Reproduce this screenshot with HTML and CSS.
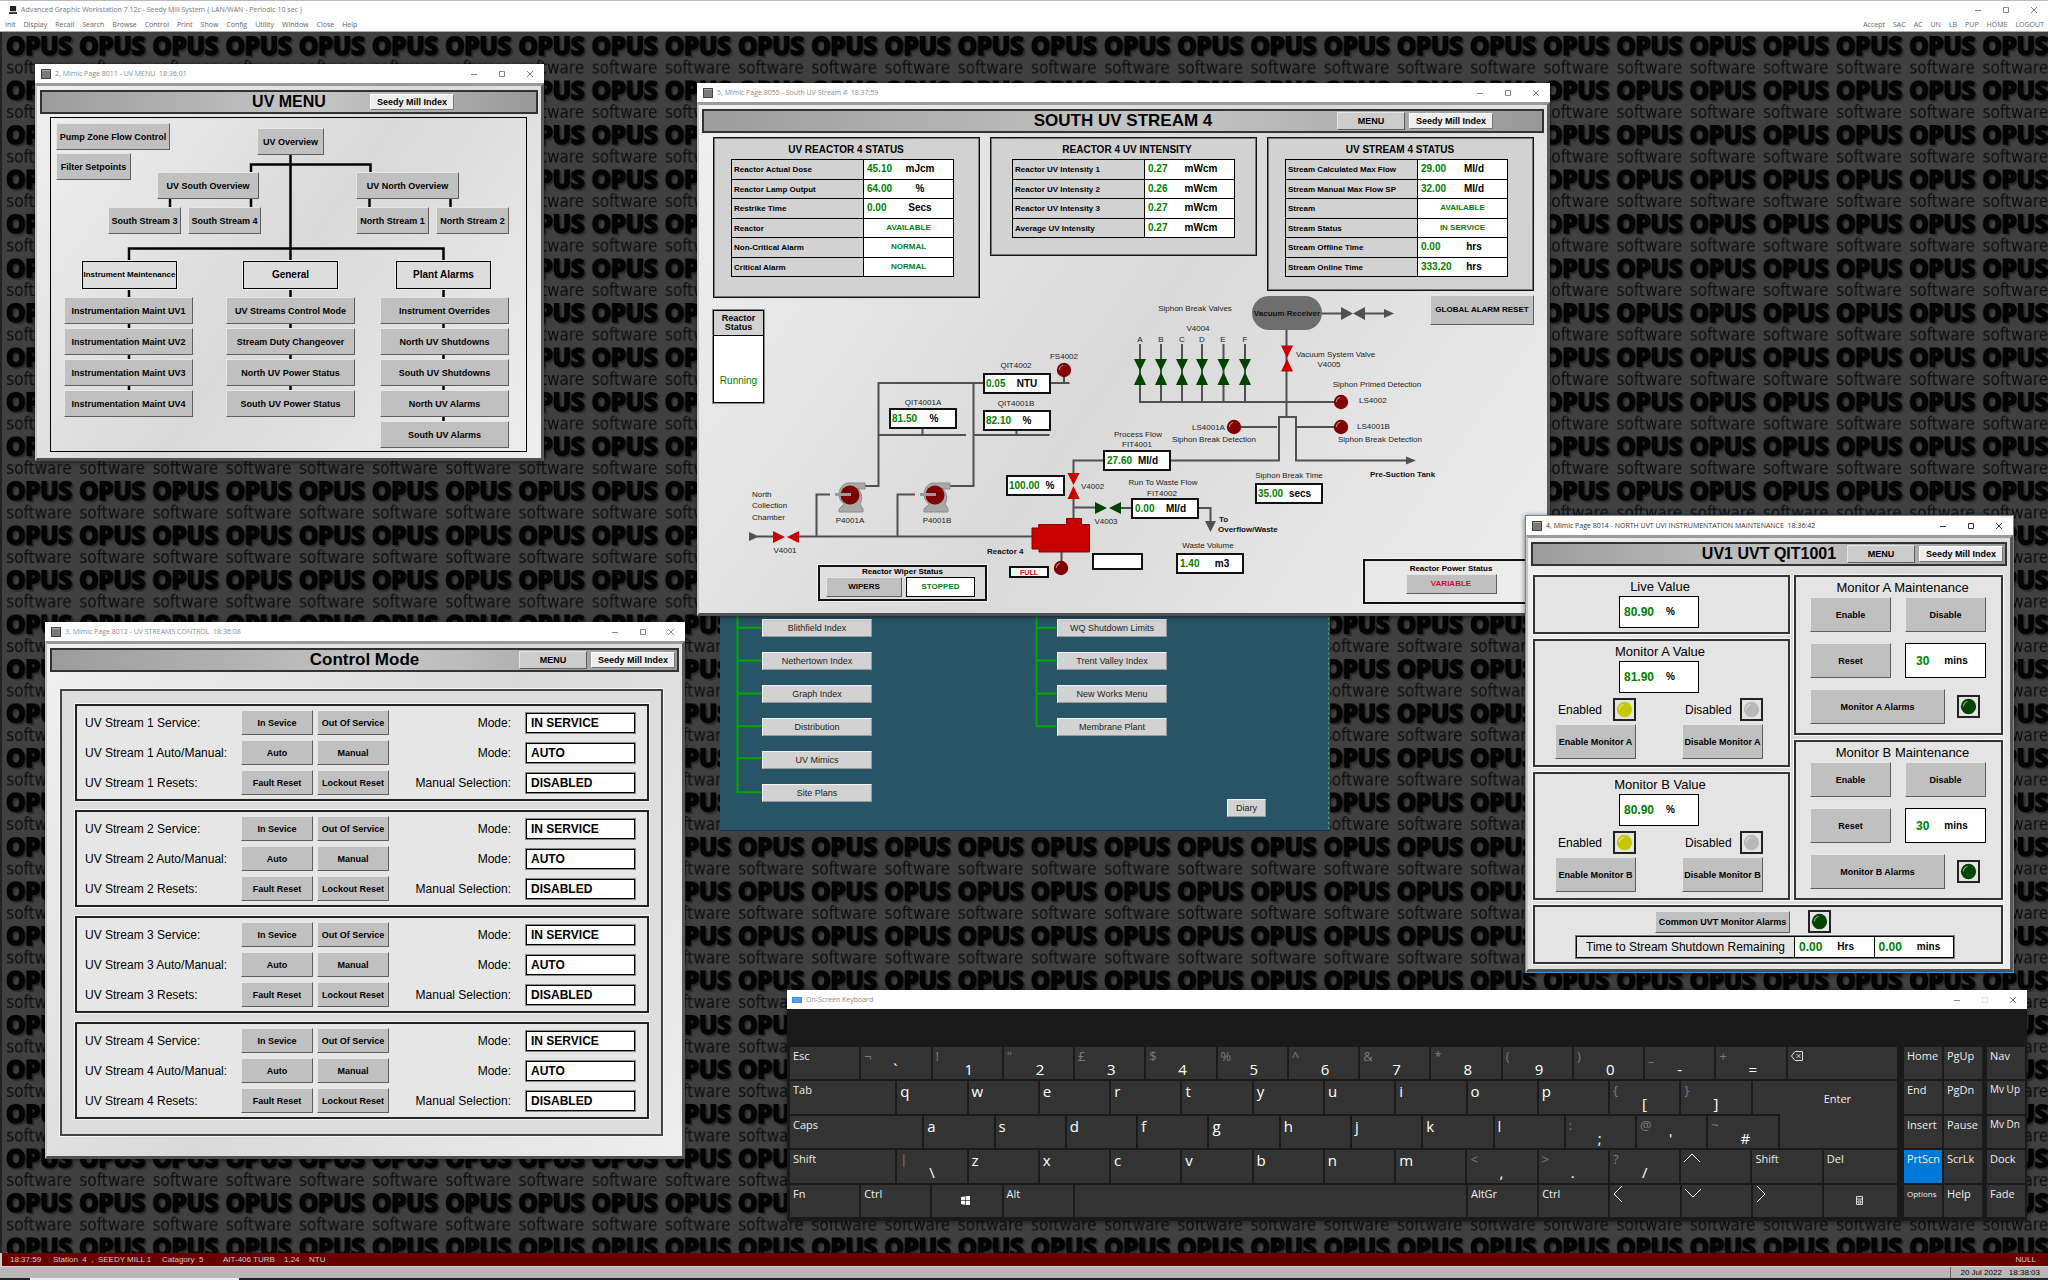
FILE: index.html
```html
<!DOCTYPE html>
<html lang="en">
<head>
<meta charset="utf-8">
<title>Advanced Graphic Workstation</title>
<link rel="stylesheet" href="styles.css">
</head>
<body>
<svg class="defs" width="0" height="0" aria-hidden="true">
  <symbol id="lamp" viewBox="0 0 16 16"><circle cx="8" cy="8" r="7.2" fill="currentColor"/><path d="M3.2 8A5 5 0 0 1 7 3.3" fill="none" stroke="#fff" stroke-opacity=".6" stroke-width="1"/></symbol>
  <symbol id="page" viewBox="0 0 10 10"><rect x=".5" y=".5" width="9" height="9" fill="#7a7a7a" stroke="#444"/><path d="M1 1.5h8" stroke="#aaa"/></symbol>
  <symbol id="min" viewBox="0 0 8 8"><path d="M1 4.5h6" stroke="currentColor" fill="none"/></symbol>
  <symbol id="max" viewBox="0 0 8 8"><path d="M1.5 1.5h5v5h-5z" stroke="currentColor" fill="none"/></symbol>
  <symbol id="close" viewBox="0 0 8 8"><path d="M1 1l6 6M7 1l-6 6" stroke="currentColor" fill="none"/></symbol>
  <symbol id="pump" viewBox="0 0 32 32">
    <path d="M12 1h18v6h-7a12 12 0 0 1 2 15l3 5v3H4v-3l5-5A12 12 0 0 1 12 1z" fill="#a8a8a8" stroke="#8c8c8c"/>
    <circle cx="15" cy="13" r="9.5" fill="#7e0000"/><path d="M0 12.5h16" stroke="#9a9a9a" stroke-width="3"/>
  </symbol>
</svg>

<header class="app">
  <div class="app-title">
    <svg class="app-icon" viewBox="0 0 9 9"><path d="M1 0h7v6H1zM0 7h9v2H0z" fill="#222"/></svg>
    <span>Advanced Graphic Workstation 7.12c - Seedy Mill System { LAN/WAN - Periodic 10 sec }</span>
    <span class="caption"><button aria-label="Minimise"><svg><use href="#min"/></svg></button><button aria-label="Maximise"><svg><use href="#max"/></svg></button><button aria-label="Close"><svg><use href="#close"/></svg></button></span>
  </div>
  <nav class="app-menu">
    <a href="#">Init</a><a href="#">Display</a><a href="#">Recall</a><a href="#">Search</a><a href="#">Browse</a><a href="#">Control</a><a href="#">Print</a><a href="#">Show</a><a href="#">Config</a><a href="#">Utility</a><a href="#">Window</a><a href="#">Close</a><a href="#">Help</a>
    <span class="app-right"><a href="#">Accept</a><a href="#">SAC</a><a href="#">AC</a><a href="#">UN</a><a href="#">LB</a><a href="#">PUP</a><a href="#">HOME</a><a href="#">LOGOUT</a></span>
  </nav>
</header>

<main class="desktop">
  <svg class="wallpaper" width="100%" height="100%" aria-hidden="true">
    <defs>
      <pattern id="opus" x="2" y="0" width="73.2" height="44.5" patternUnits="userSpaceOnUse">
        <rect width="74" height="45" fill="#404040"/>
        <text class="logo-shadow" x="37" y="25" text-anchor="middle">OPUS</text>
        <text class="logo" x="35" y="23" text-anchor="middle">OPUS</text>
        <text class="logo-sub" x="35" y="42" text-anchor="middle">software</text>
      </pattern>
    </defs>
    <rect width="100%" height="100%" fill="url(#opus)"/>
  </svg>

  <section class="index-page">
    <svg class="lines" viewBox="720 548 610 283" aria-hidden="true">
      <path d="M736.5 548V793H761M736.5 628H762M736.5 661H762M736.5 694H762M736.5 727H762M736.5 759H762M1036.5 548V727H1057M1036.5 628H1057M1036.5 661H1057M1036.5 694H1057" fill="none" stroke="#00a800" stroke-width="2"/>
      <path d="M1329.5 548V831" stroke="#5fae7a" stroke-dasharray="2 3"/>
    </svg>
    <div class="index-col index-left"><button>Blithfield Index</button><button>Nethertown Index</button><button>Graph Index</button><button>Distribution</button><button>UV Mimics</button><button>Site Plans</button></div>
    <div class="index-col index-right"><button>WQ Shutdown Limits</button><button>Trent Valley Index</button><button>New Works Menu</button><button>Membrane Plant</button></div>
    <button class="diary">Diary</button>
  </section>

  <section class="window uv-menu">
    <div class="titlebar"><svg class="page-icon"><use href="#page"/></svg><span>2, Mimic Page 8011 - UV MENU&nbsp; 18:36:01</span><span class="caption"><button aria-label="Minimise"><svg><use href="#min"/></svg></button><button aria-label="Maximise"><svg><use href="#max"/></svg></button><button aria-label="Close"><svg><use href="#close"/></svg></button></span></div>
    <div class="pane">
      <div class="banner"><h2>UV MENU</h2><div class="banner-nav nav-far"><button class="light">Seedy Mill Index</button></div></div>
      <div class="tree">
        <svg class="lines" viewBox="50 117 477 335" aria-hidden="true"><path d="M290.5 154V391M251 172V164.5H370.5V172M170 198V207M251 198V207M369.500 198V207M450.500 198V207M129 391V248.500H443.500V422" fill="none" stroke="#000" stroke-width="2.500"/></svg>
        <button class="node n-pump">Pump Zone Flow Control</button>
        <button class="node n-filter">Filter Setpoints</button>
        <button class="node n-over">UV Overview</button>
        <button class="node n-south">UV South Overview</button>
        <button class="node n-north">UV North Overview</button>
        <div class="pair p-south"><button class="node">South Stream 3</button><button class="node">South Stream 4</button></div>
        <div class="pair p-north"><button class="node">North Stream 1</button><button class="node">North Stream 2</button></div>
        <h3 class="group g-inst">Instrument Maintenance</h3>
        <h3 class="group g-gen">General</h3>
        <h3 class="group g-plant">Plant Alarms</h3>
        <div class="stack s-inst"><button class="node">Instrumentation Maint UV1</button><button class="node">Instrumentation Maint UV2</button><button class="node">Instrumentation Maint UV3</button><button class="node">Instrumentation Maint UV4</button></div>
        <div class="stack s-gen"><button class="node">UV Streams Control Mode</button><button class="node">Stream Duty Changeover</button><button class="node">North UV Power Status</button><button class="node">South UV Power Status</button></div>
        <div class="stack s-plant"><button class="node">Instrument Overrides</button><button class="node">North UV Shutdowns</button><button class="node">South UV Shutdowns</button><button class="node">North UV Alarms</button><button class="node">South UV Alarms</button></div>
      </div>
    </div>
  </section>

  <section class="window stream4">
    <div class="titlebar"><svg class="page-icon"><use href="#page"/></svg><span>5, Mimic Page 8055 - South UV Stream 4&nbsp; 18:37:59</span><span class="caption"><button aria-label="Minimise"><svg><use href="#min"/></svg></button><button aria-label="Maximise"><svg><use href="#max"/></svg></button><button aria-label="Close"><svg><use href="#close"/></svg></button></span></div>
    <div class="pane">
      <svg class="lines" viewBox="699 105 848 508">
        <g class="pipe">
          <path d="M983 383H878.500V486H862M973.500 383V486H947M1050 383H1069.500M1064 376V383M878 435H966M922.500 429V435M974 435H1049.500M1016.500 430V435"/>
          <path d="M830 494.500H816.500V536M915 494.500H897.500V536M757 536.500H773M798 536.500H1032M1061.500 552V562"/>
          <path d="M1073.500 474V460.500H1104M1073.500 498V518M1073.500 507.500H1095M1121 508H1131M1199 508H1210.500V522"/>
          <path d="M1171 460.500H1279V417H1296V460.500H1406M1241 427H1277M1297 427H1334M1286.500 330V417M1139 402H1334"/>
          <path d="M1140 344V402M1161 344V402M1182 344V402M1202 344V402M1223.500 344V402M1245 344V402M1321 313.500H1341M1365 313.500H1384"/>
        </g>
        <path fill="#505050" d="M749 532l10 4.500-10 4.500zM1205 521h11l-5.500 11zM1406 456.500l10 4-10 4zM1341 307l12 6.500-12 6.500zM1365 307l-12 6.500 12 6.500zM1384 309l10 4.500-10 4.500z"/>
        <path fill="#c80000" d="M773 531l12 6-12 6zM799 531l-12 6 12 6zM1067.500 473h12l-6 12zM1067.500 499h12l-6-13zM1281 345.500h12l-6 12.500zM1281 371.500h12l-6-12.500z"/>
        <path fill="#004400" d="M1095 502l12 6-12 6zM1121 502l-12 6 12 6zM1134 359h12l-6 12zM1134 385h12l-6-13zM1155 359h12l-6 12zM1155 385h12l-6-13zM1176 359h12l-6 12zM1176 385h12l-6-13zM1196 359h12l-6 12zM1196 385h12l-6-13zM1217.500 359h12l-6 12zM1217.500 385h12l-6-13zM1239 359h12l-6 12zM1239 385h12l-6-13z"/>
        <use href="#pump" x="835" y="482" width="32" height="32"/>
        <use href="#pump" x="920" y="482" width="32" height="32"/>
        <path fill="#c80000" stroke="#8e0000" d="M1038.500 524.500h28v-6h15v6h8v27.500h-50.500v-3h-7v-21h7z"/>
        <rect x="1252" y="296" width="70" height="34" rx="17" fill="#6e6e6e"/>
        <g color="#7e0000">
          <use href="#lamp" x="1056" y="362" width="16" height="16"/><use href="#lamp" x="1053" y="560" width="16" height="16"/><use href="#lamp" x="1333" y="394" width="16" height="16"/><use href="#lamp" x="1226" y="419" width="16" height="16"/><use href="#lamp" x="1333" y="419" width="16" height="16"/>
        </g>
        <g class="box">
          <rect x="984" y="374" width="66" height="19"/><rect x="890" y="409" width="66" height="19"/><rect x="984" y="411" width="66" height="19"/><rect x="1007" y="476" width="57" height="19"/><rect x="1104" y="451" width="66" height="19"/><rect x="1132" y="499" width="66" height="19"/><rect x="1177" y="554" width="66" height="19"/><rect x="1256" y="484" width="66" height="19"/><rect x="1010" y="567" width="38" height="10"/><rect x="1093" y="554" width="49" height="15"/>
        </g>
        <g class="val">
          <text x="986" y="387">0.05</text><text x="892" y="422">81.50</text><text x="986" y="424">82.10</text><text x="1009" y="489">100.00</text><text x="1107" y="464">27.60</text><text x="1135" y="512">0.00</text><text x="1180" y="567">1.40</text><text x="1258" y="497">35.00</text>
        </g>
        <g class="unit">
          <text x="1027" y="387">NTU</text><text x="934" y="422">%</text><text x="1027" y="424">%</text><text x="1050" y="489">%</text><text x="1148" y="464">MI/d</text><text x="1176" y="512">MI/d</text><text x="1222" y="567">m3</text><text x="1300" y="497">secs</text>
        </g>
        <text class="full" x="1029" y="575">FULL</text>
        <g class="tag mid">
          <text x="1016" y="368">QIT4002</text><text x="1064" y="359">FS4002</text><text x="923" y="405">QIT4001A</text><text x="1016" y="406">QIT4001B</text><text x="850" y="523">P4001A</text><text x="937" y="523">P4001B</text><text x="785" y="553">V4001</text><text x="1106" y="524">V4003</text>
          <text x="1138" y="437">Process Flow</text><text x="1137" y="447">FIT4001</text><text x="1163" y="485">Run To Waste Flow</text><text x="1162" y="496">FIT4002</text><text x="1208" y="548">Waste Volume</text><text x="1289" y="478">Siphon Break Time</text>
          <text x="1214" y="442">Siphon Break Detection</text><text x="1380" y="442">Siphon Break Detection</text><text x="1377" y="387">Siphon Primed Detection</text><text x="1198" y="331">V4004</text><text x="1195" y="311">Siphon Break Valves</text><text x="1329" y="367">V4005</text>
          <text x="1140" y="342">A</text><text x="1161" y="342">B</text><text x="1182" y="342">C</text><text x="1202" y="342">D</text><text x="1223" y="342">E</text><text x="1245" y="342">F</text>
        </g>
        <g class="tag">
          <text x="752" y="497">North</text><text x="752" y="508">Collection</text><text x="752" y="520">Chamber</text><text x="1081" y="489">V4002</text><text x="1192" y="430">LS4001A</text><text x="1357" y="429">LS4001B</text><text x="1359" y="403">LS4002</text><text x="1296" y="357">Vacuum System Valve</text>
        </g>
        <g class="tag strong">
          <text x="987" y="554">Reactor 4</text><text x="1219" y="522">To</text><text x="1218" y="532">Overflow/Waste</text><text x="1370" y="477">Pre-Suction Tank</text><text class="mid" x="1287" y="316">Vacuum Receiver</text>
        </g>
      </svg>
      <div class="banner"><h2 class="big">SOUTH UV STREAM 4</h2><div class="banner-nav nav-mid"><button class="menu-btn">MENU</button><button class="light">Seedy Mill Index</button></div></div>
      <div class="status-row">
        <section class="status tall"><h3>UV REACTOR 4 STATUS</h3>
          <table class="six"><tr><th scope="row">Reactor Actual Dose</th><td><b>45.10</b><i>mJcm</i></td></tr><tr><th scope="row">Reactor Lamp Output</th><td><b>64.00</b><i>%</i></td></tr><tr><th scope="row">Restrike Time</th><td><b>0.00</b><i>Secs</i></td></tr><tr><th scope="row">Reactor</th><td class="state">AVAILABLE</td></tr><tr><th scope="row">Non-Critical Alarm</th><td class="state">NORMAL</td></tr><tr><th scope="row">Critical Alarm</th><td class="state">NORMAL</td></tr></table>
        </section>
        <section class="status short"><h3>REACTOR 4 UV INTENSITY</h3>
          <table class="four"><tr><th scope="row">Reactor UV Intensity 1</th><td><b>0.27</b><i>mWcm</i></td></tr><tr><th scope="row">Reactor UV Intensity 2</th><td><b>0.26</b><i>mWcm</i></td></tr><tr><th scope="row">Reactor UV Intensity 3</th><td><b>0.27</b><i>mWcm</i></td></tr><tr><th scope="row">Average UV Intensity</th><td><b>0.27</b><i>mWcm</i></td></tr></table>
        </section>
        <section class="status"><h3>UV STREAM 4 STATUS</h3>
          <table class="six"><tr><th scope="row">Stream Calculated Max Flow</th><td><b>29.00</b><i>MI/d</i></td></tr><tr><th scope="row">Stream Manual Max Flow SP</th><td><b>32.00</b><i>MI/d</i></td></tr><tr><th scope="row">Stream</th><td class="state">AVAILABLE</td></tr><tr><th scope="row">Stream Status</th><td class="state">IN SERVICE</td></tr><tr><th scope="row">Stream Offline Time</th><td><b>0.00</b><i>hrs</i></td></tr><tr><th scope="row">Stream Online Time</th><td><b>333.20</b><i>hrs</i></td></tr></table>
        </section>
      </div>
      <div class="reactor-state"><h3>Reactor Status</h3><p>Running</p></div>
      <button class="alarm-reset">GLOBAL ALARM RESET</button>
      <div class="wiper"><h3>Reactor Wiper Status</h3><div><button>WIPERS</button><output>STOPPED</output></div></div>
      <div class="power"><h3>Reactor Power Status</h3><button>VARIABLE</button></div>
    </div>
  </section>

  <section class="window control">
    <div class="titlebar"><svg class="page-icon"><use href="#page"/></svg><span>3, Mimic Page 8012 - UV STREAMS CONTROL&nbsp; 18:36:08</span><span class="caption"><button aria-label="Minimise"><svg><use href="#min"/></svg></button><button aria-label="Maximise"><svg><use href="#max"/></svg></button><button aria-label="Close"><svg><use href="#close"/></svg></button></span></div>
    <div class="pane">
      <div class="banner"><h2 class="big">Control Mode</h2><div class="banner-nav"><button class="menu-btn">MENU</button><button class="light">Seedy Mill Index</button></div></div>
      <div class="modes">
        <div class="mode-group">
          <span>UV Stream 1 Service:</span><button>In Sevice</button><button>Out Of Service</button><label for="m11">Mode:</label><output id="m11">IN SERVICE</output>
          <span>UV Stream 1 Auto/Manual:</span><button>Auto</button><button>Manual</button><label for="m12">Mode:</label><output id="m12">AUTO</output>
          <span>UV Stream 1 Resets:</span><button>Fault Reset</button><button>Lockout Reset</button><label for="m13">Manual Selection:</label><output id="m13">DISABLED</output>
        </div>
        <div class="mode-group">
          <span>UV Stream 2 Service:</span><button>In Sevice</button><button>Out Of Service</button><label for="m21">Mode:</label><output id="m21">IN SERVICE</output>
          <span>UV Stream 2 Auto/Manual:</span><button>Auto</button><button>Manual</button><label for="m22">Mode:</label><output id="m22">AUTO</output>
          <span>UV Stream 2 Resets:</span><button>Fault Reset</button><button>Lockout Reset</button><label for="m23">Manual Selection:</label><output id="m23">DISABLED</output>
        </div>
        <div class="mode-group">
          <span>UV Stream 3 Service:</span><button>In Sevice</button><button>Out Of Service</button><label for="m31">Mode:</label><output id="m31">IN SERVICE</output>
          <span>UV Stream 3 Auto/Manual:</span><button>Auto</button><button>Manual</button><label for="m32">Mode:</label><output id="m32">AUTO</output>
          <span>UV Stream 3 Resets:</span><button>Fault Reset</button><button>Lockout Reset</button><label for="m33">Manual Selection:</label><output id="m33">DISABLED</output>
        </div>
        <div class="mode-group">
          <span>UV Stream 4 Service:</span><button>In Sevice</button><button>Out Of Service</button><label for="m41">Mode:</label><output id="m41">IN SERVICE</output>
          <span>UV Stream 4 Auto/Manual:</span><button>Auto</button><button>Manual</button><label for="m42">Mode:</label><output id="m42">AUTO</output>
          <span>UV Stream 4 Resets:</span><button>Fault Reset</button><button>Lockout Reset</button><label for="m43">Manual Selection:</label><output id="m43">DISABLED</output>
        </div>
      </div>
    </div>
  </section>

  <section class="window active monitor">
    <div class="titlebar"><svg class="page-icon"><use href="#page"/></svg><span>4, Mimic Page 8014 - NORTH UVT UVI INSTRUMENTATION MAINTENANCE&nbsp; 18:36:42</span><span class="caption"><button aria-label="Minimise"><svg><use href="#min"/></svg></button><button aria-label="Maximise"><svg><use href="#max"/></svg></button><button aria-label="Close"><svg><use href="#close"/></svg></button></span></div>
    <div class="pane">
      <div class="banner"><h2>UV1 UVT QIT1001</h2><div class="banner-nav"><button class="menu-btn">MENU</button><button class="light">Seedy Mill Index</button></div></div>
      <div class="mon-grid">
        <div class="mon-left">
          <section class="card live"><h3>Live Value</h3><output class="reading"><b>80.90</b><i>%</i></output></section>
          <section class="card value"><h3>Monitor A Value</h3><output class="reading"><b>81.90</b><i>%</i></output>
            <div class="toggles"><div class="toggle"><span class="flag">Enabled<svg class="lamp yellow"><use href="#lamp"/></svg></span><button>Enable Monitor A</button></div><div class="toggle"><span class="flag">Disabled<svg class="lamp grey"><use href="#lamp"/></svg></span><button>Disable Monitor A</button></div></div></section>
          <section class="card value"><h3>Monitor B Value</h3><output class="reading"><b>80.90</b><i>%</i></output>
            <div class="toggles"><div class="toggle"><span class="flag">Enabled<svg class="lamp yellow"><use href="#lamp"/></svg></span><button>Enable Monitor B</button></div><div class="toggle"><span class="flag">Disabled<svg class="lamp grey"><use href="#lamp"/></svg></span><button>Disable Monitor B</button></div></div></section>
        </div>
        <div class="mon-right">
          <section class="card maint"><h3>Monitor A Maintenance</h3>
            <div class="keys2"><button>Enable</button><button>Disable</button><button>Reset</button><output class="mins"><b>30</b><i>mins</i></output></div>
            <div class="alarms"><button>Monitor A Alarms</button><svg class="lamp green"><use href="#lamp"/></svg></div></section>
          <section class="card maint"><h3>Monitor B Maintenance</h3>
            <div class="keys2"><button>Enable</button><button>Disable</button><button>Reset</button><output class="mins"><b>30</b><i>mins</i></output></div>
            <div class="alarms"><button>Monitor B Alarms</button><svg class="lamp green"><use href="#lamp"/></svg></div></section>
        </div>
        <section class="card common">
          <div class="common-top"><button>Common UVT Monitor Alarms</button><svg class="lamp green"><use href="#lamp"/></svg></div>
          <div class="countdown"><span>Time to Stream Shutdown Remaining</span><output><b>0.00</b><i>Hrs</i></output><output><b>0.00</b><i>mins</i></output></div>
        </section>
      </div>
    </div>
  </section>

  <section class="window keyboard">
    <div class="titlebar"><svg class="kb-icon" viewBox="0 0 10 6"><rect width="10" height="6" fill="#3b8ee0"/><path d="M1 1.500h8M1 3h8M3 4.500h4" stroke="#9cc8f4" stroke-width=".8" stroke-dasharray="1 .6"/></svg><span>On-Screen Keyboard</span><span class="caption"><button aria-label="Minimise"><svg><use href="#min"/></svg></button><button class="faint" aria-label="Maximise"><svg><use href="#max"/></svg></button><button aria-label="Close"><svg><use href="#close"/></svg></button></span></div>
    <div class="kb">
      <div class="kb-main">
        <div class="kb-row"><button class="k">Esc</button><button class="k two"><s>¬</s><b>`</b></button><button class="k two"><s>!</s><b>1</b></button><button class="k two"><s>"</s><b>2</b></button><button class="k two"><s>£</s><b>3</b></button><button class="k two"><s>$</s><b>4</b></button><button class="k two"><s>%</s><b>5</b></button><button class="k two"><s>^</s><b>6</b></button><button class="k two"><s>&amp;</s><b>7</b></button><button class="k two"><s>*</s><b>8</b></button><button class="k two"><s>(</s><b>9</b></button><button class="k two"><s>)</s><b>0</b></button><button class="k two"><s>_</s><b>-</b></button><button class="k two"><s>+</s><b>=</b></button><button class="k w-back" aria-label="Backspace"><svg class="back" viewBox="0 0 12 10"><path d="M4 .5h7.500v9H4L.5 5zM5.500 3l4 4M9.500 3l-4 4" fill="none" stroke="#ddd"/></svg></button></div>
        <div class="kb-row"><button class="k w-tab">Tab</button><button class="k ch">q</button><button class="k ch">w</button><button class="k ch">e</button><button class="k ch">r</button><button class="k ch">t</button><button class="k ch">y</button><button class="k ch">u</button><button class="k ch">i</button><button class="k ch">o</button><button class="k ch">p</button><button class="k two"><s>{</s><b>[</b></button><button class="k two"><s>}</s><b>]</b></button><button class="k w-enter">Enter</button></div>
        <div class="kb-row"><button class="k w-caps">Caps</button><button class="k ch">a</button><button class="k ch">s</button><button class="k ch">d</button><button class="k ch">f</button><button class="k ch">g</button><button class="k ch">h</button><button class="k ch">j</button><button class="k ch">k</button><button class="k ch">l</button><button class="k two"><s>:</s><b>;</b></button><button class="k two"><s>@</s><b>'</b></button><button class="k two"><s>~</s><b>#</b></button><div class="k w-foot"></div></div>
        <div class="kb-row"><button class="k w-tab">Shift</button><button class="k two"><s>|</s><b>\</b></button><button class="k ch">z</button><button class="k ch">x</button><button class="k ch">c</button><button class="k ch">v</button><button class="k ch">b</button><button class="k ch">n</button><button class="k ch">m</button><button class="k two"><s>&lt;</s><b>,</b></button><button class="k two"><s>&gt;</s><b>.</b></button><button class="k two"><s>?</s><b>/</b></button><button class="k" aria-label="Up"><svg class="arrow" viewBox="0 0 16 16"><path d="M0 11l8-8 8 8"/></svg></button><button class="k">Shift</button><button class="k w-del">Del</button></div>
        <div class="kb-row"><button class="k">Fn</button><button class="k">Ctrl</button><button class="k" aria-label="Windows"><svg class="win" viewBox="0 0 9 9"><path d="M0 1l4-.6v3.800H0zM4.700.3L9-.3v4.500H4.700zM0 4.900h4v3.800L0 8zM4.700 4.900H9v4.500l-4.300-.6z" fill="#fff"/></svg></button><button class="k">Alt</button><button class="k w-space" aria-label="Space"></button><button class="k">AltGr</button><button class="k">Ctrl</button><button class="k" aria-label="Left"><svg class="arrow" viewBox="0 0 16 16"><path d="M9 0L1 8l8 8"/></svg></button><button class="k" aria-label="Down"><svg class="arrow" viewBox="0 0 16 16"><path d="M0 3l8 8 8-8"/></svg></button><button class="k" aria-label="Right"><svg class="arrow" viewBox="0 0 16 16"><path d="M1 0l8 8-8 8"/></svg></button><button class="k w-del" aria-label="Menu"><svg class="ctx" viewBox="0 0 7 9"><path d="M.5.5h6v8h-6zM.5 3h6M2 5h3v2H2z" fill="none" stroke="#ddd"/></svg></button></div>
      </div>
      <div class="kb-side">
        <button>Home</button><button>PgUp</button><button>Nav</button>
        <button>End</button><button>PgDn</button><button class="sm">Mv Up</button>
        <button>Insert</button><button>Pause</button><button class="sm">Mv Dn</button>
        <button class="on">PrtScn</button><button>ScrLk</button><button>Dock</button>
        <button class="xs">Options</button><button>Help</button><button>Fade</button>
      </div>
    </div>
  </section>
</main>

<footer>
  <div class="alarm-bar"><span class="a-time">18:37:59</span><span class="a-station">Station&nbsp; 4&nbsp; , &nbsp;SEEDY MILL 1</span><span class="a-cat">Catagory&nbsp; 5</span><span class="a-tag">AIT-406 TURB</span><span class="a-val">1.24</span><span>NTU</span><span class="null">NULL</span></div>
  <div class="info-bar"><span>20 Jul 2022</span><span>18:38:03</span></div>
  <div class="taskbar"></div>
</footer>
</body>
</html>
```
FILE: styles.css
```css
* { box-sizing: border-box; }
body { margin: 0; height: 100vh; display: flex; flex-direction: column; overflow: hidden; background: #c8c8c8; color: #000; font: 9px/12px "Liberation Sans", Arial, sans-serif; }
h2, h3, p { margin: 0; font-size: inherit; }
button { padding: 0; font: bold 9px/12px "Liberation Sans", Arial, sans-serif; color: #000; white-space: nowrap; background: #c0c0c0; border: 1px solid; border-color: #e6e6e6 #5e5e5e #5e5e5e #e6e6e6; border-radius: 0; }
i, s { font-style: normal; text-decoration: none; }
.defs { position: absolute; }

/* application frame */
.app { background: #fff; border-top: 1px solid #bbb; height: 32px; border-bottom: 1px solid #aaa; font: 7px/12px "Open Sans", "Noto Sans", sans-serif; color: #666; }
.app-title { display: flex; align-items: center; height: 18px; padding-left: 9px; gap: 4px; color: #777; }
.app-icon { width: 8px; height: 8px; }
.app-menu { display: flex; gap: 8px; padding: 0 4px 0 5px; }
.app-menu a { color: inherit; text-decoration: none; }
.app-right { display: flex; gap: 8px; margin-left: auto; }
.caption { display: flex; margin-left: auto; color: #888; }
.caption button { width: 28px; height: 18px; border: 0; background: none; color: inherit; display: grid; place-items: center; }
.caption .faint { color: #ddd; }
.caption svg { width: 8px; height: 8px; }

.desktop { position: relative; flex: 1; min-height: 0; overflow: hidden; border-left: 2px solid #222; }
.wallpaper { position: absolute; left: 0; top: 0; }
.logo, .logo-shadow { font: bold 24px "Open Sans", "Noto Sans", sans-serif; }
.logo { fill: #060606; stroke: #000; stroke-width: 2px; }
.logo-shadow { fill: #262626; stroke: #2c2c2c; stroke-width: 2px; }
.logo-sub { font: 17px "DejaVu Sans Condensed", "Open Sans", sans-serif; fill: #0a0a0a; }

/* windows */
.window { position: absolute; display: flex; flex-direction: column; box-shadow: 0 1px 5px rgba(0,0,0,.6); }
.titlebar { display: flex; align-items: center; flex: none; height: 19px; padding-left: 6px; gap: 4px; background: #fff; color: #8c8c8c; font: 7px/12px "Open Sans", "Noto Sans", sans-serif; }
.page-icon { width: 10px; height: 10px; }
.active { border: 1px solid #4a8fd0; }
.active .titlebar, .active .caption { color: #333; }
.pane { position: relative; flex: 1; border: solid; border-width: 3px 3px 3px 2px; border-color: #9a9a9a #5a5a5a #505050 #c4c4c4; background: linear-gradient(125deg, #f0f0f0, #d9d9d9 50%, #eee); }
.lines { position: absolute; left: 0; top: 0; width: 100%; height: 100%; }
.banner { position: relative; display: grid; grid-template-columns: 1fr auto 1fr; align-items: center; height: 24px; margin: 4px 3px 0; border: 2px solid #303330; background: linear-gradient(90deg, #9c9c9c, #c6c6c6 55%, #989898); }
.banner h2 { grid-column: 2; font-size: 16px; line-height: 20px; }
.banner h2.big { font-size: 17px; }
.banner-nav { display: flex; justify-content: flex-end; align-items: center; gap: 4px; padding-right: 2px; }
.nav-far { padding-right: 82px; }
.nav-mid { padding-right: 49px; }
.menu-btn { width: 68px; height: 18px; background: #ccc; }
.light { width: 84px; height: 16px; background: #eee; border-color: #fff #777 #777 #fff; }

/* UV menu */
.uv-menu { left: 33px; top: 32px; width: 509px; height: 397px; }
.tree { position: relative; width: 477px; height: 335px; margin: 3px 0 0 13px; border: 1px solid #000; }
.tree .lines { left: -1px; top: -1px; width: 477px; height: 335px; }
.tree > button, .group, .pair, .stack { position: absolute; }
.node { height: 27px; }
.n-pump { left: 5px; top: 5px; width: 114px; }
.n-filter { left: 5px; top: 35px; width: 75px; }
.n-over { left: 206px; top: 10px; width: 67px; }
.n-south { left: 106px; top: 54px; width: 102px; }
.n-north { left: 305px; top: 54px; width: 103px; }
.pair { top: 89px; display: flex; gap: 7px; }
.pair .node { width: 73px; }
.p-south { left: 57px; }
.p-north { left: 305px; }
.group { top: 143px; width: 95px; height: 28px; border: 1px solid #000; outline: 1px solid #f0f0f0; font: bold 10px/26px "Liberation Sans", Arial, sans-serif; text-align: center; background: #ddd; white-space: nowrap; }
.g-inst { left: 31px; font-size: 8px; }
.g-gen { left: 192px; }
.g-plant { left: 345px; }
.stack { top: 179px; width: 129px; display: flex; flex-direction: column; gap: 4px; }
.s-inst { left: 13px; }
.s-gen { left: 175px; }
.s-plant { left: 329px; }

/* stream 4 mimic */
.stream4 { left: 695px; top: 51px; width: 853px; height: 533px; }
.pipe path { fill: none; stroke: #505050; stroke-width: 2px; }
.box rect { fill: #fff; stroke: #111; stroke-width: 2px; }
.val { font-weight: bold; font-size: 10px; fill: #008000; }
.unit { font-weight: bold; font-size: 10px; text-anchor: middle; }
.full { font-weight: bold; font-size: 7px; fill: #d00000; text-anchor: middle; }
.tag { font-size: 8px; fill: #222; }
.mid { text-anchor: middle; }
.strong { font-weight: bold; fill: #111; }
.status-row { position: relative; display: flex; align-items: flex-start; gap: 10px; margin: 4px 0 0 14px; }
.status { width: 267px; height: 154px; padding: 6px 0 0 17px; border: 1px solid #111; outline: 1px solid #777; outline-offset: -2px; background: #d2d2d2; }
.status.tall { height: 161px; }
.status.short { height: 119px; padding-left: 21px; }
.status h3 { width: 230px; font-size: 10px; line-height: 12px; margin-bottom: 3px; text-align: center; }
.status table { border-collapse: collapse; width: 223px; table-layout: fixed; }
.six { height: 118px; }
.four { height: 79px; }
.status th { width: 132px; padding: 2px 0 0 2px; font-size: 8px; line-height: 10px; text-align: left; border: 1px solid #000; }
.status td { padding: 0 0 0 3px; font-size: 10px; line-height: 12px; font-weight: bold; background: #fff; border: 1px solid #000; white-space: nowrap; }
.status td b { display: inline-block; width: 32px; color: #008000; }
.status td i { display: inline-block; width: 42px; text-align: center; }
.status td.state { padding: 0; font-size: 8px; text-align: center; color: #008020; }
.reactor-state { position: absolute; left: 14px; top: 205px; width: 51px; height: 93px; border: 1px solid #000; outline: 1px solid #888; background: #fff; text-align: center; font-size: 10px; }
.reactor-state h3 { height: 25px; padding-top: 3px; font-size: 9px; line-height: 9px; background: #d2d2d2; border-bottom: 1px solid #000; }
.reactor-state p { padding-top: 39px; font-size: 10px; color: #008000; }
.alarm-reset { position: absolute; left: 731px; top: 190px; width: 104px; height: 30px; font-size: 8px; }
.wiper, .power { position: absolute; border: 2px solid #111; outline: 1px solid #f4f4f4; text-align: center; font-size: 8px; line-height: 10px; }
.wiper { left: 119px; top: 460px; width: 169px; height: 36px; }
.wiper div { display: flex; gap: 4px; padding: 0 6px; }
.wiper button, .power button { font-size: 8px; height: 20px; }
.wiper button { width: 76px; }
.wiper output { width: 69px; height: 20px; border: 1px solid #000; background: #fff; font-weight: bold; line-height: 18px; color: #008020; }
.power { left: 664px; top: 454px; width: 171px; height: 45px; padding-top: 3px; padding-left: 5px; }
.power button { width: 91px; color: #c8102e; }

/* index page */
.index-page { position: absolute; left: 718px; top: 516px; width: 610px; height: 283px; background: #285467; border-bottom: 1px solid #173542; }
.index-page button { width: 110px; height: 18px; font-weight: normal; color: #222; background: #d2d2d2; border-color: #f4f4f4 #999 #999 #f4f4f4; }
.index-col { position: absolute; display: flex; flex-direction: column; gap: 15px; }
.index-left { left: 42px; top: 71px; }
.index-right { left: 337px; top: 71px; }
.index-page .diary { position: absolute; left: 507px; top: 251px; width: 39px; }

/* control mode */
.control { left: 43px; top: 590px; width: 640px; height: 537px; }
.modes { display: flex; flex-direction: column; gap: 9px; margin: 17px 19px 0 13px; padding: 13px 12px 15px 13px; height: 447px; border: 2px solid #444; outline: 1px solid #f6f6f6; background: #ddd; }
.mode-group { flex: 1; display: grid; grid-template-columns: 154px 72px 72px 1fr 109px; column-gap: 4px; row-gap: 5px; align-content: center; align-items: center; padding: 0 12px 0 6px; border: 2px solid #222; outline: 1px solid #f6f6f6; background: #e6e6e6; font-size: 12px; line-height: 16px; white-space: nowrap; }
.mode-group span { padding-left: 2px; }
.mode-group button { height: 25px; }
.mode-group label { text-align: right; padding-right: 11px; }
.mode-group output { height: 20px; padding-left: 4px; border: 1px solid #000; outline: 1px solid #888; background: #fff; font-weight: bold; line-height: 18px; }

/* monitor maintenance */
.monitor { left: 1523px; top: 483px; width: 489px; height: 458px; }
.mon-grid { display: grid; grid-template-columns: 257px 209px; gap: 5px 4px; margin: 9px 5px 0; }
.mon-left, .mon-right { display: flex; flex-direction: column; gap: 5px; }
.card { border: 2px solid #333; outline: 1px solid #fafafa; background: #e4e4e4; }
.card h3 { font-weight: normal; font-size: 13px; line-height: 16px; text-align: center; }
.mon-left h3 { padding-right: 3px; }
.live { height: 59px; padding-top: 2px; }
.value { height: 128px; padding-top: 3px; }
.reading, .mins { display: flex; align-items: center; width: 80px; height: 32px; border: 1px solid #000; background: #fff; font-weight: bold; }
.reading { margin: 1px 0 0 84px; padding-left: 4px; gap: 12px; font-size: 10px; }
.reading b, .mins b, .countdown b { font-size: 12px; color: #008000; }
.toggles { display: flex; gap: 46px; padding: 5px 0 0 20px; }
.toggle { width: 81px; }
.toggle button { width: 81px; height: 35px; margin-top: 3px; }
.flag { display: flex; align-items: center; justify-content: space-between; padding-left: 3px; font-size: 12px; }
.lamp { width: 23px; height: 23px; padding: 1px; border: 2px solid #222; }
.yellow { color: #c8c800; }
.grey { color: #b8b8b8; }
.green { color: #004400; }
.maint { height: 160px; padding: 3px 0 0 14px; }
.mon-right .maint h3 { margin: 0 0 1px -6px; }
.keys2 { display: grid; grid-template-columns: 81px 81px; gap: 11px 14px; }
.keys2 button, .keys2 output { height: 35px; width: 81px; }
.mins { padding-left: 10px; gap: 15px; font-size: 10px; }
.alarms { display: flex; align-items: center; gap: 12px; margin-top: 11px; }
.alarms button { width: 135px; height: 35px; }
.common { grid-column: 1 / 3; height: 59px; }
.common-top { display: flex; align-items: center; gap: 18px; padding: 3px 0 0 120px; }
.common-top button { width: 135px; height: 22px; }
.countdown { display: flex; width: 378px; height: 22px; margin: 3px 0 0 41px; border: 1px solid #000; outline: 1px solid #777; font-size: 12px; line-height: 20px; }
.countdown span { width: 217px; text-align: center; white-space: nowrap; }
.countdown output { flex: 1; display: flex; gap: 15px; padding-left: 4px; border-left: 1px solid #000; background: #fff; font-weight: bold; font-size: 10px; }

/* on-screen keyboard */
.keyboard { left: 785px; top: 958px; width: 1240px; height: 231px; background: #1a1a1a; }
.kb-icon { width: 10px; height: 6px; }
.keyboard .titlebar { padding-left: 5px; }
.kb { flex: 1; display: flex; gap: 5px; padding: 38px 0 2px 3px; }
.kb-main { flex: 1; display: grid; grid-template-rows: repeat(5, 1fr); }
.kb-row { display: flex; }
.kb button, .kb .k { position: relative; display: flex; align-items: flex-start; margin: 0; padding: 1px 0 0 3px; border: solid #1a1a1a; border-width: 0 2px 2px 0; background: #333; color: #eee; font: 11px/15px "Open Sans", "Noto Sans", sans-serif; text-align: left; }
.kb .k { flex: 1 1 71px; min-width: 0; }
.kb .w-back { flex-basis: 111px; padding-top: 2px; }
.kb .w-tab { flex-basis: 107px; }
.kb .w-enter { flex-basis: 146px; padding: 10px 0 0 71px; }
.kb .w-caps { flex-basis: 134px; }
.kb .w-foot { flex-basis: 119px; margin-top: -2px; }
.kb .w-del { flex-basis: 75px; }
.kb .w-space { flex-basis: 393px; }
.kb .ch { font-size: 15px; line-height: 18px; color: #fff; }
.kb .two s { width: 29px; font-size: 13px; line-height: 16px; color: #7c7c7c; }
.kb .two b { padding-top: 12px; font-size: 15px; font-weight: normal; line-height: 18px; color: #fff; }
.arrow { width: 16px; height: 16px; fill: none; stroke: #fff; }
.back { width: 12px; height: 10px; margin-top: 2px; }
.win { width: 9px; height: 9px; margin: 10px 0 0 26px; }
.ctx { width: 7px; height: 9px; margin: 10px 0 0 29px; }
.kb-side { display: grid; grid-template-columns: 40px 43px 40px; grid-template-rows: repeat(5, 1fr); }
.kb-side button:nth-child(3n + 2) { border-right-width: 5px; }
.kb .sm { font-size: 10px; }
.kb .xs { font-size: 8px; }
.kb .on { background: #0078d7; }

/* bottom bars */
footer { flex: none; font-size: 8px; }
.alarm-bar { display: flex; height: 13px; padding: 0 12px 0 8px; margin-left: 2px; background: #680000; color: #d8c8c8; line-height: 13px; white-space: nowrap; }
.a-time { width: 43px; }
.a-station { width: 109px; }
.a-cat { width: 61px; }
.a-tag { width: 61px; }
.a-val { width: 25px; }
.null { margin-left: auto; }
.info-bar { display: flex; justify-content: flex-end; gap: 7px; height: 12px; padding-right: 8px; background: #b8b8b8; border-top: 1px solid #d4d4d4; line-height: 12px; }
.info-bar span:first-child { padding-left: 9px; border-left: 1px solid #666; }
.taskbar { height: 2px; background: linear-gradient(90deg, #222 30px, #eee 30px, #eee 239px, #222 239px); }
```
